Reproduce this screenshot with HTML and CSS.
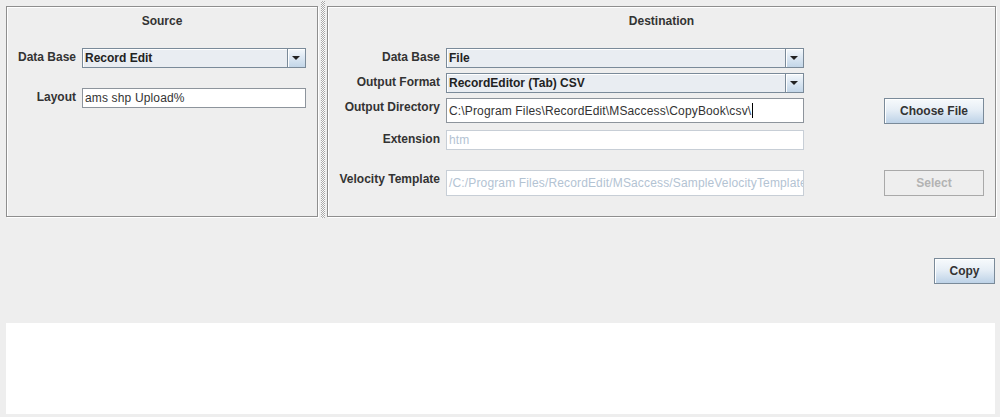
FILE: index.html
```html
<!DOCTYPE html>
<html lang="en">
<head>
<meta charset="utf-8">
<title>Copy</title>
<link rel="stylesheet" href="styles.css">
</head>
<body>
<div class="app">
  <div class="split">
    <section class="panel source">
      <h3 class="title">Source</h3>
      <div class="rows">
        <div class="row">
          <label class="lbl">Data Base</label>
          <div class="combo field"><span class="value">Record Edit</span><span class="arrow"></span></div>
        </div>
        <div class="row gap-lg">
          <label class="lbl">Layout</label>
          <div class="text field"><span class="value">ams shp Upload%</span></div>
        </div>
      </div>
    </section>
    <div class="divider"><div class="bumps"></div></div>
    <section class="panel dest">
      <h3 class="title">Destination</h3>
      <div class="rows">
        <div class="row">
          <label class="lbl">Data Base</label>
          <div class="combo field"><span class="value">File</span><span class="arrow"></span></div>
        </div>
        <div class="row gap-sm">
          <label class="lbl">Output Format</label>
          <div class="combo field"><span class="value">RecordEditor (Tab) CSV</span><span class="arrow"></span></div>
        </div>
        <div class="row gap-sm">
          <label class="lbl">Output Directory</label>
          <div class="text field tall"><span class="value">C:\Program Files\RecordEdit\MSaccess\CopyBook\csv\</span><span class="caret"></span></div>
          <button class="btn side">Choose File</button>
        </div>
        <div class="row gap-md">
          <label class="lbl">Extension</label>
          <div class="text field disabled"><span class="value">htm</span></div>
        </div>
        <div class="row gap-lg">
          <label class="lbl">Velocity Template</label>
          <div class="text field disabled tall2"><span class="value">/C:/Program Files/RecordEdit/MSaccess/SampleVelocityTemplate</span></div>
          <button class="btn side off" disabled>Select</button>
        </div>
      </div>
    </section>
  </div>
  <div class="actions">
    <button class="btn copy">Copy</button>
  </div>
  <div class="log"></div>
</div>
</body>
</html>
```
FILE: styles.css
```css
* { box-sizing: border-box; }
html, body { margin: 0; padding: 0; }
body {
  background: #eeeeee;
  font-family: "Liberation Sans", Arial, sans-serif;
  font-size: 12px;
  color: #333333;
  width: 1000px;
  height: 417px;
  overflow: hidden;
}
.app {
  display: flex;
  flex-direction: column;
  padding: 0 4px 0 6px;
}
.split {
  display: flex;
  height: 219px;
}
.panel {
  margin: 6px 0 2px;
  border: 1px solid #8e8e8e;
  box-shadow: inset 1px 1px 0 #ffffff, 1px 1px 0 #ffffff;
  display: flex;
  flex-direction: column;
}
.source { width: 312px; }
.dest { width: 669px; }
.divider {
  width: 9px;
  display: flex;
  justify-content: center;
  padding: 1px 0 0;
}
.bumps {
  width: 4px;
  height: 217px;
  background: conic-gradient(#9c9c9c 25%, #ffffff 0 50%, #9c9c9c 0 75%, #ffffff 0) 0 0 / 2px 2px;
  opacity: 0.85;
}
.title {
  margin: 6px 0 0;
  font-size: 12px;
  line-height: 16px;
  font-weight: bold;
  text-align: center;
}
.rows {
  display: flex;
  flex-direction: column;
  margin-top: 19px;
}
.row {
  display: flex;
  align-items: flex-start;
}
.row.gap-sm { margin-top: 5px; }
.row.gap-md { margin-top: 6px; }
.row.gap-lg { margin-top: 20px; }
.lbl {
  font-weight: bold;
  text-align: right;
  line-height: 16px;
  padding-top: 1px;
  margin-right: 6px;
  white-space: nowrap;
}
.source .lbl { width: 69px; }
.source .field { width: 224px; }
.dest .lbl { width: 112px; }
.dest .field { width: 358px; }
.field {
  height: 20px;
  display: flex;
  align-items: center;
  overflow: hidden;
  white-space: nowrap;
}
.field.tall { height: 25px; }
.field.tall2 { height: 26px; }
.combo {
  border: 1px solid #7a8a99;
  background: #e9edf2;
  box-shadow: inset 1px 1px 0 #ffffff;
}
.combo .value {
  flex: 1;
  font-weight: bold;
  padding-left: 2px;
  color: #222222;
}
.combo .arrow {
  width: 18px;
  height: 100%;
  border-left: 1px solid #7a8a99;
  background: linear-gradient(#f4f8fb, #dde8f3 45%, #c3d6e8);
  box-shadow: inset 1px 1px 0 #ffffff;
  position: relative;
}
.combo .arrow::after {
  content: "";
  position: absolute;
  left: 4px;
  top: 7px;
  border-left: 4px solid transparent;
  border-right: 4px solid transparent;
  border-top: 4px solid #222222;
}
.text {
  border: 1px solid #8d949c;
  background: #ffffff;
  padding-left: 2px;
  color: #333333;
}
.text .value { letter-spacing: 0.15px; }
.caret {
  display: inline-block;
  width: 1px;
  height: 15px;
  background: #000000;
  margin-left: 1px;
}
.text.disabled {
  border-color: #c7ced6;
  color: #b3c3d3;
}
.btn {
  font-family: "Liberation Sans", Arial, sans-serif;
  font-size: 12px;
  font-weight: bold;
  color: #333333;
  border: 1px solid #7a8a99;
  background: linear-gradient(#f7fafc, #e6eef6 45%, #bdd2e7);
  box-shadow: inset 1px 1px 0 #ffffff;
  padding: 0;
  cursor: default;
}
.btn.side {
  width: 100px;
  height: 26px;
  margin-left: 80px;
}
.btn.off {
  background: #eeeeee;
  border-color: #a9a9a9;
  color: #b3b3b3;
  box-shadow: none;
}
.actions {
  display: flex;
  justify-content: flex-end;
  margin-top: 39px;
  padding-right: 1px;
}
.btn.copy {
  width: 61px;
  height: 26px;
}
.log {
  margin-top: 39px;
  height: 91px;
  background: #ffffff;
  margin-right: 1px;
}
```
